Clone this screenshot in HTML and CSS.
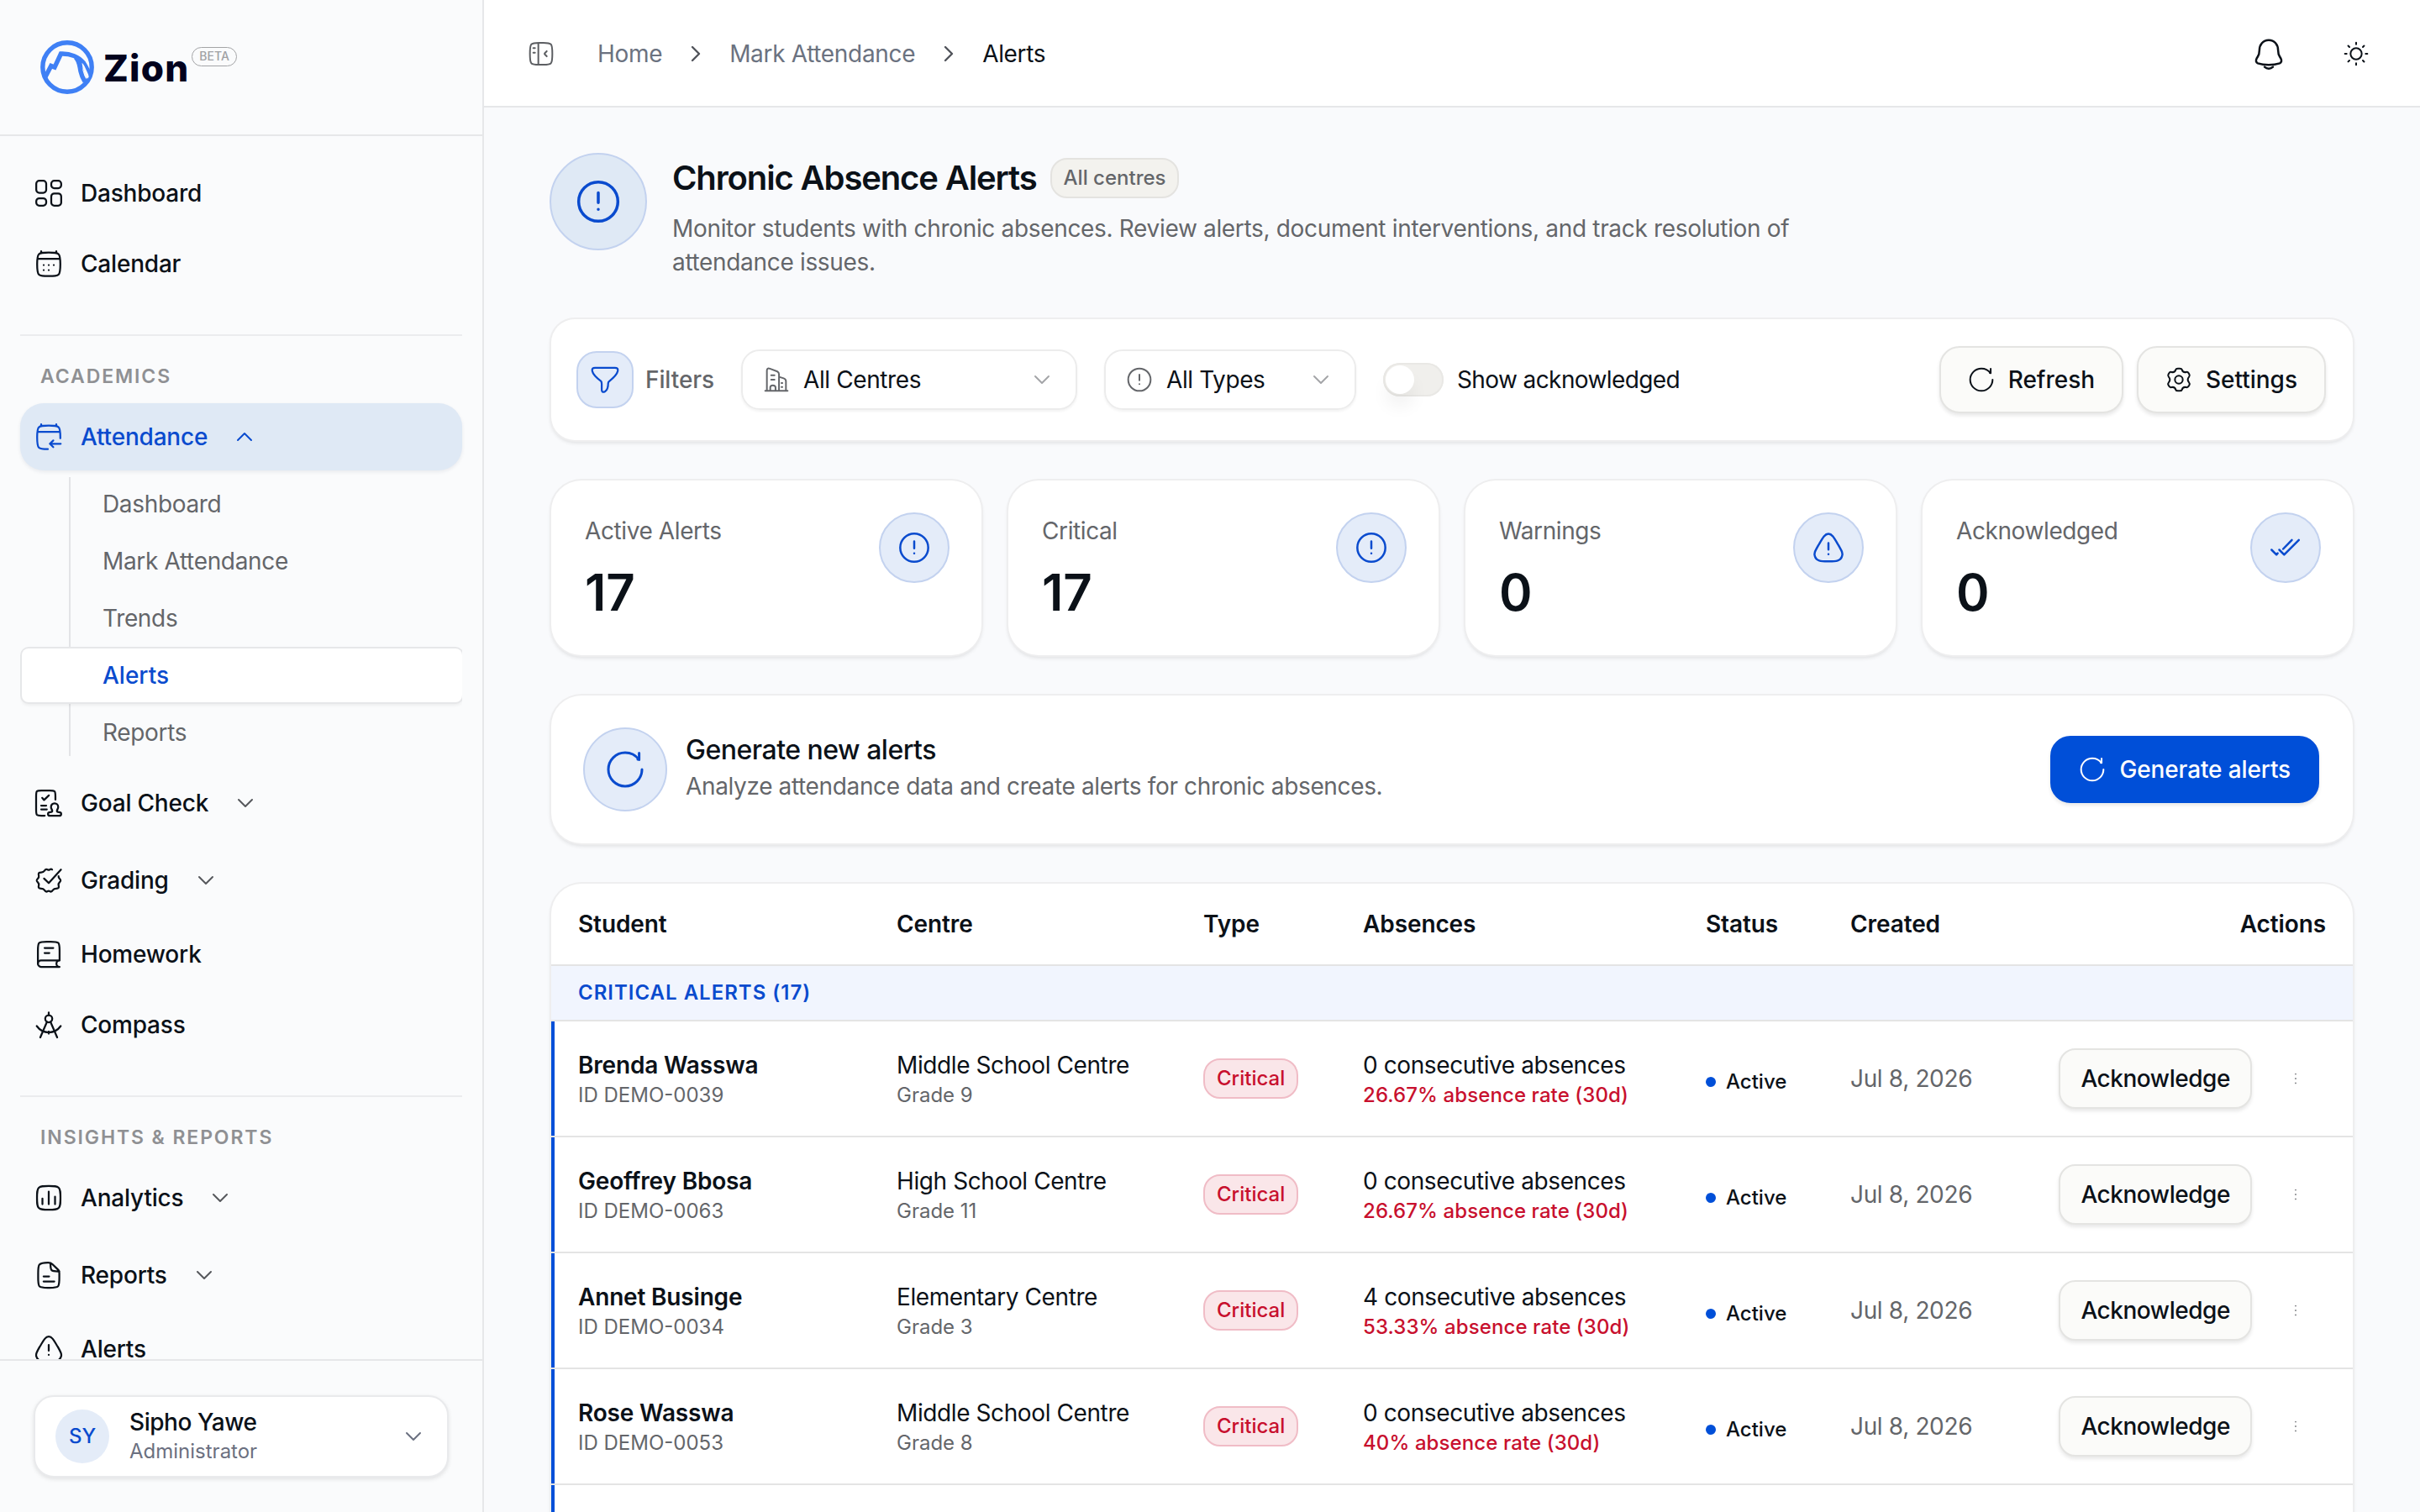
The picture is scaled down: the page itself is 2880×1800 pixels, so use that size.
FILE: index.html
```html
<!DOCTYPE html>
<html lang="en">
  <head>
    <meta charset="UTF-8" />
    <meta name="viewport" content="width=device-width, initial-scale=1.0" />
    <title>Chronic Absence Alerts - Zion</title>
    <link rel="stylesheet" href="styles.css">
  </head>
  <body>
    <!-- icon sprite -->
    <svg class="sprite" xmlns="http://www.w3.org/2000/svg">
      <symbol id="i-dashboard" viewBox="0 0 24 24">
        <rect x="2.1" y="2.1" width="7.9" height="9.6" rx="2.4" />
        <rect x="2.1" y="16" width="7.9" height="5.9" rx="2.4" />
        <rect x="14" y="2.1" width="7.9" height="5.9" rx="2.4" />
        <rect x="14" y="12.2" width="7.9" height="9.7" rx="2.4" />
      </symbol>
      <symbol id="i-calendar" viewBox="0 0 24 24">
        <path d="M18 2v1.6M6 2v1.6M3 8h18M2.8 12.4c0-4.3 0-6.5 1.3-7.9C5.3 3.1 7.5 3.1 12 3.1s6.7 0 7.9 1.4c1.3 1.4 1.3 3.6 1.3 7.9s0 6.7-1.3 8.1c-1.2 1.3-3.4 1.3-7.9 1.3s-6.7 0-7.9-1.3C2.8 19.1 2.8 16.7 2.8 12.4Z" />
        <path d="M8 13h.01M12 13h.01M16 13h.01M8 17h.01M12 17h.01" />
      </symbol>
      <symbol id="i-calendar-in" viewBox="0 0 24 24">
        <path d="M18 2v1.6M6 2v1.6M3 8h18M21.2 13.2v-1c0-4.2 0-6.3-1.3-7.7C18.7 3.1 16.5 3.1 12 3.1s-6.7 0-7.9 1.4C2.8 5.9 2.8 8 2.8 12.4c0 4.3 0 6.7 1.3 8.1 1.1 1.2 3 1.3 7.2 1.3" />
        <path d="M21.5 17.5h-8.4M15.6 14.9l-2.7 2.6 2.7 2.7" />
      </symbol>
      <symbol id="i-goal" viewBox="0 0 24 24">
        <path d="M17.3 9.3V6.8c0-2.3 0-3.4-.7-4.1-.7-.7-1.7-.7-3.8-.7H6.2c-2 0-3 0-3.6.7C2 3.4 2 4.5 2 6.8v10.4c0 2.3 0 3.4.6 4.1.7.7 1.6.7 3.6.7h2.6" />
        <path d="M6.8 7.9l1.5 1.7 3.8-3.7M6 14h4M6 17h4.5M16.6 12.3c-1.7 0-2.8 1.2-2.8 2.8 0 1.4.9 2 1 3.1 0 .8-.5 1-1.5 1-1.1 0-1.9.4-1.9 1.4 0 .9.6 1.5 1.6 1.5h7.3c1 0 1.6-.6 1.6-1.5 0-1-.8-1.4-1.9-1.4-1 0-1.5-.2-1.5-1 .1-1.100 1-1.700 1-3.100 0-1.600-1.200-2.800-2.900-2.800Z" />
      </symbol>
      <symbol id="i-grading" viewBox="0 0 24 24">
        <path d="M19.8 8.7c-.2.9.3 1.5.9 2.1 1.1 1.1 1.1 1.5 0 2.6-.9.9-1.2 1.4-.9 2.5.5 1.9.1 2.6-1.9 2.6-1.2 0-1.9.3-2.6 1.3-.9 1.4-1.5 1.5-2.5.9-.6-.4-1.1-.4-1.7 0-1 .6-1.6.5-2.5-.9-.7-1-1.4-1.3-2.6-1.3-2 0-2.4-.7-1.9-2.6.3-1.1 0-1.6-.9-2.5-1.1-1.1-1.1-1.5 0-2.6.9-.9 1.2-1.4.9-2.5-.5-1.9-.1-2.6 1.9-2.6 1.2 0 1.9-.3 2.6-1.3.9-1.4 1.5-1.5 2.5-.9.6.4 1.1.4 1.7 0 .8-.5 1.3-.6 1.9 0" />
        <path d="M8.3 10.6l3.7 3.6 9.7-10.7" />
      </symbol>
      <symbol id="i-book" viewBox="0 0 24 24">
        <path d="M20.6 16.9V9c0-3.3 0-5-1-6s-2.7-1-6-1h-3.2c-3.3 0-5 0-6 1s-1 2.7-1 6v10.5" />
        <path d="M20.6 16.9H5.9c-1.4 0-2.5 1.1-2.5 2.5S4.5 22 5.9 22h14.7M20.6 22c-1.4 0-2.5-1.1-2.5-2.5s1.1-2.6 2.5-2.6M15.6 7H8.7M12.5 11H8.7" />
      </symbol>
      <symbol id="i-compass" viewBox="0 0 24 24">
        <circle cx="12" cy="7.2" r="2.8" />
        <path d="M12 4.4V2.2M10.6 9.7L5.3 22M13.4 9.7L18.7 22M2.5 13c2.3 3.2 5.7 5 9.5 5s7.200-1.800 9.500-5M12 17.400v1.600" />
      </symbol>
      <symbol id="i-analytics" viewBox="0 0 24 24">
        <path d="M2.7 12c0-4.4 0-6.6 1.4-8S7.6 2.6 12 2.6s6.5 0 7.9 1.4 1.4 3.6 1.4 8 0 6.6-1.4 8-3.5 1.4-7.9 1.4-6.5 0-7.9-1.4-1.4-3.6-1.4-8ZM7 17v-4.5M12 17V7M17 17v-6" />
      </symbol>
      <symbol id="i-report" viewBox="0 0 24 24">
        <path d="M7.9 17h8.5M7.9 13h4.4M13.4 2.5V3c0 2.8 0 4.2.9 5.1.9.9 2.3.9 5.1.9h1M20.4 10.7V14c0 3.8 0 5.7-1 6.8-1.2 1.2-3 1.2-6.5 1.2h-1.8c-3.5 0-5.3 0-6.5-1.2-1-1.1-1-3-1-6.8v-3.5c0-3.7 0-5.6 1-6.9 1.3-1.5 3.2-1.6 6.9-1.6 1.9 0 2.2.1 3.4 1.3l3.9 3.8c1.4 1.4 1.6 1.6 1.6 3.6Z" />
      </symbol>
      <symbol id="i-triangle" viewBox="0 0 24 24">
        <path d="M12 8.700v4.600M12 16.600h.01" />
        <path d="M5.3 9.500C8.200 4.500 9.600 2.100 12 2.100s3.800 2.400 6.700 7.400l.4.600c2.400 4.200 3.600 6.300 2.500 8.300-1.100 3-3.800 3.400-9.100 3.400h-1c-5.300 0-8-.4-9.100-3.400-1.100-2 .1-4.100 2.500-8.300Z" />
      </symbol>
      <symbol id="i-alert" viewBox="0 0 24 24">
        <circle cx="12" cy="12" r="10" />
        <path d="M12 7.5v5M12 16h.01" />
      </symbol>
      <symbol id="i-down" viewBox="0 0 24 24"><path d="M18 9l-6 6-6-6" /></symbol>
      <symbol id="i-up" viewBox="0 0 24 24"><path d="M18 15l-6-6-6 6" /></symbol>
      <symbol id="i-right" viewBox="0 0 24 24"><path d="M9 6l6 6-6 6" /></symbol>
      <symbol id="i-panel" viewBox="0 0 24 24">
        <path d="M2 12c0-4.7 0-7 1.2-8.4C4.6 2.2 6.7 2.2 10 2.2h4c3.3 0 5.4 0 6.8 1.4C22 5 22 7.3 22 12s0 7-1.2 8.4c-1.4 1.4-3.5 1.4-6.8 1.4h-4c-3.3 0-5.4 0-6.8-1.4C2 19 2 16.7 2 12ZM9.5 2.5v19M5 7h1.5M5 11h1.5M17 9.7l-1.7 1.7c-.4.4-.4.8 0 1.2L17 14.3" />
      </symbol>
      <symbol id="i-bell" viewBox="0 0 24 24">
        <path d="M5.3 9.7c0-4.3 2.7-7.5 6.7-7.5s6.7 3.2 6.7 7.5c0 3.3.8 3.6 1.8 5.4 1.1 2 .5 3.2-.7 3.7-4.3 1.5-11.3 1.5-15.6 0-1.2-.5-1.8-1.7-.7-3.7 1-1.8 1.8-2.1 1.8-5.4Z" />
        <path d="M9 21.4c1.7 1.6 4.3 1.6 6 0" />
      </symbol>
      <symbol id="i-sun" viewBox="0 0 24 24">
        <circle cx="12" cy="12" r="5" />
        <path d="M12 2v1.5M12 20.5V22M19.07 4.93l-1.06 1.06M5.99 18l-1.06 1.06M22 12h-1.5M3.5 12H2M19.07 19.07l-1.06-1.06M5.99 6L4.93 4.93" />
      </symbol>
      <symbol id="i-filter" viewBox="0 0 24 24">
        <path d="M8.9 13.3C4.9 10.3 2.3 7.1 1.9 5.2c-.4-1.7.3-2.7 2.3-2.7h15.600c2 0 2.700 1 2.300 2.700-.4 1.900-3 5.100-6.700 8-.6.500-.9 1.100-.9 1.800 0 4-.7 5.200-2.400 6.300-1.900 1.100-2.700.3-2.700-1.300v-4.500c0-.9 0-1.600-.5-2.200Z" />
      </symbol>
      <symbol id="i-building" viewBox="0 0 24 24">
        <path d="M14.3 22V7.2c0-1.4-.2-1.9-1.5-2.5L6.2 2.2C4.4 1.5 3.5 2 3.5 4v18M14.3 9.5l4.2 1.3c1.5.5 2 .8 2 2.5V22M2 22h20M7.3 8h3M7.3 12h3M16.5 15h.8M16.5 18.5h.8M6.5 22v-3c0-1.4.4-2 2.3-2s2.4.6 2.4 2v3" />
      </symbol>
      <symbol id="i-refresh" viewBox="0 0 24 24">
        <path d="M22 12c0 5.5-4.5 10-10 10S2 17.5 2 12 6.5 2 12 2c3.6 0 6.3 1.6 8 4M20.3 2.3V6.2L19.500 6" />
      </symbol>
      <symbol id="i-settings" viewBox="0 0 24 24">
        <circle cx="12" cy="12" r="3.5" />
        <path d="M21.3 7.1l-.5-.8c-.6-1.1-1-1.4-2.2-1.1-2.1.5-3.2-.1-3.8-2.1-.3-1-.7-1.1-1.9-1.1h-1.8c-1.2 0-1.6.1-1.9 1.1-.6 2-1.7 2.6-3.8 2.1-1.2-.3-1.6 0-2.2 1.1l-.5.8c-.6 1.1-.6 1.5.2 2.4 1.5 1.7 1.5 3.3 0 5-.8.9-.8 1.3-.2 2.4l.5.8c.6 1.1 1 1.4 2.2 1.1 2.1-.5 3.2.1 3.8 2.1.3 1 .7 1.1 1.9 1.1h1.8c1.2 0 1.6-.1 1.9-1.1.6-2 1.7-2.6 3.8-2.1 1.2.3 1.6 0 2.2-1.1l.5-.8c.6-1.1.6-1.5-.2-2.4-1.5-1.7-1.5-3.3 0-5 .8-.9.8-1.3.2-2.4Z" />
      </symbol>
      <symbol id="i-checks" viewBox="0 0 24 24">
        <path d="M2 13.5l3.5 3.5.9-1M16.5 6.500L10.300 12.900M7.500 13.500L11 17 21.500 6.500" />
      </symbol>
      <symbol id="i-more" viewBox="0 0 24 24"><path d="M12 5.5v.01M12 12v.01M12 18.5v.01" /></symbol>
    </svg>

    <div class="layout">
      <aside class="sidebar">
        <div class="brand">
          <svg class="logo" viewBox="0 0 64 64">
            <circle cx="32" cy="32" r="29.2" />
            <path d="M6 43.500L12.800 30.500l4.200 1.600L24.500 16C36 15.500 46 20 51 26.500c3 4 5 8.500 7.500 14.500" />
            <path d="M42 20c5 5 4.500 10 6 17 1 5 2.500 8 5 12M51 26c1.500 7 4 12 7 17" />
            <path class="gap" d="M49.500 27c1.600 1 2.600 2.600 3.400 4.600 1.800 4.600 4.600 8.600 4.800 12l-1.600 2.200c-3.600-5-5.800-11.800-6.600-18.800Z" />
          </svg>
          <span class="brand-name">Zion</span>
          <span class="beta">BETA</span>
        </div>

        <nav class="nav">
          <div class="nav-group">
            <a class="nav-item"><svg class="icon"><use href="#i-dashboard" /></svg>Dashboard</a>
            <a class="nav-item"><svg class="icon"><use href="#i-calendar" /></svg>Calendar</a>
          </div>

          <div class="nav-group">
            <h3 class="nav-label">Academics</h3>
            <div class="nav-collapse">
              <a class="nav-item active"><svg class="icon"><use href="#i-calendar-in" /></svg>Attendance<svg class="caret"><use href="#i-up" /></svg></a>
              <div class="submenu">
                <a>Dashboard</a>
                <a>Mark Attendance</a>
                <a>Trends</a>
                <a class="current">Alerts</a>
                <a>Reports</a>
              </div>
            </div>
            <div class="nav-collapse">
              <a class="nav-item"><svg class="icon"><use href="#i-goal" /></svg>Goal Check<svg class="caret"><use href="#i-down" /></svg></a>
            </div>
            <div class="nav-collapse">
              <a class="nav-item"><svg class="icon"><use href="#i-grading" /></svg>Grading<svg class="caret"><use href="#i-down" /></svg></a>
            </div>
            <a class="nav-item"><svg class="icon"><use href="#i-book" /></svg>Homework</a>
            <a class="nav-item"><svg class="icon"><use href="#i-compass" /></svg>Compass</a>
          </div>

          <div class="nav-group">
            <h3 class="nav-label">Insights &amp; Reports</h3>
            <div class="nav-collapse">
              <a class="nav-item"><svg class="icon"><use href="#i-analytics" /></svg>Analytics<svg class="caret"><use href="#i-down" /></svg></a>
            </div>
            <div class="nav-collapse">
              <a class="nav-item"><svg class="icon"><use href="#i-report" /></svg>Reports<svg class="caret"><use href="#i-down" /></svg></a>
            </div>
            <a class="nav-item"><svg class="icon"><use href="#i-triangle" /></svg>Alerts</a>
          </div>
        </nav>

        <div class="sidebar-footer">
          <div class="user">
            <span class="avatar">SY</span>
            <div class="user-info">
              <span class="user-name">Sipho Yawe</span>
              <span class="user-role">Administrator</span>
            </div>
            <svg class="caret"><use href="#i-down" /></svg>
          </div>
        </div>
      </aside>

      <main class="main">
        <header class="topbar">
          <svg class="icon panel"><use href="#i-panel" /></svg>
          <div class="breadcrumb">
            <span>Home</span>
            <svg class="sep"><use href="#i-right" /></svg>
            <span>Mark Attendance</span>
            <svg class="sep"><use href="#i-right" /></svg>
            <span class="here">Alerts</span>
          </div>
          <svg class="icon bell"><use href="#i-bell" /></svg>
          <svg class="icon sun"><use href="#i-sun" /></svg>
        </header>

        <div class="content">
          <section class="hero">
            <div class="bubble bubble-xl"><svg><use href="#i-alert" /></svg></div>
            <div class="hero-text">
              <div class="hero-title">
                <h1>Chronic Absence Alerts</h1>
                <span class="badge">All centres</span>
              </div>
              <p>Monitor students with chronic absences. Review alerts, document interventions, and track resolution of attendance issues.</p>
            </div>
          </section>

          <section class="card filters">
            <span class="filter-icon"><svg><use href="#i-filter" /></svg></span>
            <span class="filter-label">Filters</span>
            <div class="select select-centre">
              <svg class="lead"><use href="#i-building" /></svg>All Centres<svg class="drop"><use href="#i-down" /></svg>
            </div>
            <div class="select select-type">
              <svg class="lead"><use href="#i-alert" /></svg>All Types<svg class="drop"><use href="#i-down" /></svg>
            </div>
            <span class="switch"></span>
            <span class="switch-label">Show acknowledged</span>
            <div class="filter-actions">
              <button class="btn"><svg><use href="#i-refresh" /></svg>Refresh</button>
              <button class="btn"><svg><use href="#i-settings" /></svg>Settings</button>
            </div>
          </section>

          <section class="stats">
            <div class="card stat">
              <div><span class="stat-label">Active Alerts</span><span class="stat-value">17</span></div>
              <div class="bubble bubble-md"><svg><use href="#i-alert" /></svg></div>
            </div>
            <div class="card stat">
              <div><span class="stat-label">Critical</span><span class="stat-value">17</span></div>
              <div class="bubble bubble-md"><svg><use href="#i-alert" /></svg></div>
            </div>
            <div class="card stat">
              <div><span class="stat-label">Warnings</span><span class="stat-value">0</span></div>
              <div class="bubble bubble-md"><svg><use href="#i-triangle" /></svg></div>
            </div>
            <div class="card stat">
              <div><span class="stat-label">Acknowledged</span><span class="stat-value">0</span></div>
              <div class="bubble bubble-md"><svg><use href="#i-checks" /></svg></div>
            </div>
          </section>

          <section class="card generate">
            <div class="bubble bubble-lg"><svg><use href="#i-refresh" /></svg></div>
            <div class="generate-text">
              <h2>Generate new alerts</h2>
              <p>Analyze attendance data and create alerts for chronic absences.</p>
            </div>
            <button class="btn btn-primary"><svg><use href="#i-refresh" /></svg>Generate alerts</button>
          </section>

          <section class="card table-card">
            <table>
              <colgroup>
                <col class="c-student" />
                <col class="c-centre" />
                <col class="c-type" />
                <col class="c-absences" />
                <col class="c-status" />
                <col class="c-created" />
                <col />
              </colgroup>
              <thead>
                <tr>
                  <th>Student</th>
                  <th>Centre</th>
                  <th>Type</th>
                  <th>Absences</th>
                  <th>Status</th>
                  <th>Created</th>
                  <th class="right">Actions</th>
                </tr>
              </thead>
              <tbody>
                <tr class="section-row"><td colspan="7">Critical alerts (17)</td></tr>
                <tr class="row">
                  <td><b>Brenda Wasswa</b><small>ID DEMO-0039</small></td>
                  <td><span>Middle School Centre</span><small>Grade 9</small></td>
                  <td><em class="critical">Critical</em></td>
                  <td><span>0 consecutive absences</span><small class="rate">26.67% absence rate (30d)</small></td>
                  <td><div class="status">Active</div></td>
                  <td class="date">Jul 8, 2026</td>
                  <td><div class="actions"><button class="btn btn-sm">Acknowledge</button><svg class="more"><use href="#i-more" /></svg></div></td>
                </tr>
                <tr class="row">
                  <td><b>Geoffrey Bbosa</b><small>ID DEMO-0063</small></td>
                  <td><span>High School Centre</span><small>Grade 11</small></td>
                  <td><em class="critical">Critical</em></td>
                  <td><span>0 consecutive absences</span><small class="rate">26.67% absence rate (30d)</small></td>
                  <td><div class="status">Active</div></td>
                  <td class="date">Jul 8, 2026</td>
                  <td><div class="actions"><button class="btn btn-sm">Acknowledge</button><svg class="more"><use href="#i-more" /></svg></div></td>
                </tr>
                <tr class="row">
                  <td><b>Annet Businge</b><small>ID DEMO-0034</small></td>
                  <td><span>Elementary Centre</span><small>Grade 3</small></td>
                  <td><em class="critical">Critical</em></td>
                  <td><span>4 consecutive absences</span><small class="rate">53.33% absence rate (30d)</small></td>
                  <td><div class="status">Active</div></td>
                  <td class="date">Jul 8, 2026</td>
                  <td><div class="actions"><button class="btn btn-sm">Acknowledge</button><svg class="more"><use href="#i-more" /></svg></div></td>
                </tr>
                <tr class="row">
                  <td><b>Rose Wasswa</b><small>ID DEMO-0053</small></td>
                  <td><span>Middle School Centre</span><small>Grade 8</small></td>
                  <td><em class="critical">Critical</em></td>
                  <td><span>0 consecutive absences</span><small class="rate">40% absence rate (30d)</small></td>
                  <td><div class="status">Active</div></td>
                  <td class="date">Jul 8, 2026</td>
                  <td><div class="actions"><button class="btn btn-sm">Acknowledge</button><svg class="more"><use href="#i-more" /></svg></div></td>
                </tr>
                <tr class="row"><td></td><td></td><td></td><td></td><td></td><td></td><td></td></tr>
              </tbody>
            </table>
          </section>
        </div>
      </main>
    </div>
  </body>
</html>
```
FILE: styles.css
```css
* {
  box-sizing: border-box;
  margin: 0;
  padding: 0;
}

body {
  height: 100vh;
  overflow: hidden;
  font-family: Inter, "Liberation Sans", sans-serif;
  font-size: 28px;
  line-height: 40px;
  color: #0b1118;
  background: #f9fafc;
}

.sprite {
  display: none;
}

svg {
  flex: none;
  fill: none;
  stroke: currentColor;
  stroke-width: 1.5;
  stroke-linecap: round;
  stroke-linejoin: round;
}

.layout {
  display: flex;
  height: 100vh;
  overflow: hidden;
}

/* Sidebar */
.sidebar {
  display: flex;
  flex-direction: column;
  width: 576px;
  flex: none;
  border-right: 2px solid #e6e7e9;
  background: #fafbfc;
}

.brand {
  display: flex;
  align-items: flex-start;
  height: 162px;
  padding: 48px 48px 0;
  border-bottom: 2px solid #e6e7e9;

  .logo {
    width: 64px;
    height: 64px;
    stroke: #3f80f5;
    stroke-width: 5.4;
    stroke-linecap: butt;
    stroke-linejoin: miter;
  }

  .gap {
    fill: #fafbfc;
    stroke: none;
  }

  .brand-name {
    margin-left: 11px;
    font-size: 44px;
    font-weight: 800;
    line-height: 66px;
    letter-spacing: 1.2px;
    color: #02021e;
  }

  .beta {
    height: 23px;
    margin: 8px 0 0 3px;
    padding: 0 8px;
    border: 1.5px solid #a3a4a6;
    border-radius: 12px;
    font-size: 14px;
    font-weight: 500;
    line-height: 20px;
    color: #a0a1a4;
  }
}

.nav {
  flex: 1;
  min-height: 0;
  overflow: hidden;
  padding: 28px 24px 0;
}

.nav-group {
  display: flex;
  flex-direction: column;
  gap: 4px;

  & + & {
    margin-top: 44px;
    border-top: 2px solid #ebecee;
  }
}

.nav-label {
  margin: 32px 0 8px;
  padding-left: 24px;
  font-size: 23px;
  font-weight: 600;
  line-height: 32px;
  letter-spacing: 1.9px;
  text-transform: uppercase;
  color: #8f9093;
}

.nav-collapse {
  padding: 4px 0;
}

.nav-item {
  display: flex;
  align-items: center;
  height: 80px;
  padding-left: 16px;
  border-radius: 28px;
  font-weight: 500;
  letter-spacing: -0.2px;

  .icon {
    width: 36px;
    height: 36px;
    margin-right: 20px;
  }

  .caret {
    width: 32px;
    height: 32px;
    margin-left: 28px;
    color: #56585c;
  }

  &.active {
    color: #0a4bce;
    background: #dfe9f5;
    box-shadow: 0 2px 4px rgba(20, 40, 80, 0.08);

    .caret {
      color: #0a4bce;
    }
  }
}

.submenu {
  display: flex;
  flex-direction: column;
  gap: 4px;
  height: 336px;
  margin-top: 8px;
  overflow: hidden;
  background: linear-gradient(#e3e4e6, #e3e4e6) 58px 0 / 2px 332px no-repeat;

  > a {
    height: 64px;
    padding-left: 96px;
    margin-left: 2px;
    line-height: 64px;
    letter-spacing: -0.34px;
    color: #64666a;
  }

  > .current {
    border-radius: 8px;
    font-weight: 500;
    letter-spacing: 0;
    color: #0a4bce;
    background: #fff;
    box-shadow: 0 0 0 2px #e6e7e9, 0 3px 4px rgba(0, 0, 0, 0.08);
  }
}

.sidebar-footer {
  height: 182px;
  padding: 41px 40px 0;
  border-top: 2px solid #e6e7e9;
}

.user {
  display: flex;
  align-items: center;
  height: 98px;
  padding: 0 24px;
  border: 2px solid #e9eaec;
  border-radius: 24px;
  background: #fff;
  box-shadow: 0 2px 5px rgba(0, 0, 0, 0.1);

  .avatar {
    width: 64px;
    height: 64px;
    border-radius: 50%;
    font-size: 24px;
    font-weight: 500;
    line-height: 64px;
    text-align: center;
    color: #0a4bce;
    background: #e4ecf8;
  }

  .user-info {
    flex: 1;
    margin-left: 24px;
  }

  .user-name {
    display: block;
    font-weight: 500;
    line-height: 36px;
    letter-spacing: -0.45px;
  }

  .user-role {
    display: block;
    font-size: 24px;
    line-height: 34px;
    color: #6b7080;
  }

  .caret {
    width: 32px;
    height: 32px;
    color: #6b7080;
  }
}

/* Top bar */
.main {
  flex: 1;
  min-width: 0;
}

.topbar {
  display: flex;
  align-items: center;
  height: 128px;
  padding: 2px 60px 0 52px;
  border-bottom: 2px solid #e6e7e9;
  background: #fff;

  .panel {
    width: 32px;
    height: 32px;
    color: #5c5e62;
  }

  .bell {
    width: 40px;
    height: 40px;
    margin-left: auto;
  }

  .sun {
    width: 32px;
    height: 32px;
    margin-left: 68px;
  }
}

.breadcrumb {
  display: flex;
  align-items: center;
  margin-left: 51px;
  letter-spacing: -0.33px;
  color: #6b7280;

  .sep {
    width: 32px;
    height: 32px;
    margin: 0 24px;
    stroke-width: 1.8;
    color: #50535a;
  }

  .here {
    color: #0b1118;
  }
}

/* Page content */
.content {
  display: flex;
  flex-direction: column;
  gap: 48px;
  padding: 54px 80px 0;
}

.hero {
  display: flex;
  height: 150px;
  margin-left: -2px;

  p {
    max-width: 1344px;
    margin-top: 12px;
    letter-spacing: -0.33px;
    color: #64666a;
  }
}

.hero-text {
  margin: 2px 0 0 30px;
}

.hero-title {
  display: flex;
  align-items: center;
  height: 56px;

  h1 {
    font-size: 40px;
    font-weight: 600;
    letter-spacing: -1.13px;
  }
}

.badge {
  height: 48px;
  margin-left: 16px;
  padding: 0 14px;
  border: 2px solid #e4e3e0;
  border-radius: 20px;
  font-size: 24px;
  font-weight: 500;
  line-height: 44px;
  color: #64666a;
  background: #f3f2ee;
}

.bubble {
  display: flex;
  flex: none;
  align-items: center;
  justify-content: center;
  border: 2px solid #c3d2ef;
  border-radius: 50%;
  color: #0a4bce;
  background: #e4ecf9;
}

.bubble-xl {
  width: 116px;
  height: 116px;
  background: #dfe9f5;

  svg {
    width: 56px;
    height: 56px;
  }
}

.bubble-lg {
  width: 100px;
  height: 100px;

  svg {
    width: 48px;
    height: 48px;
  }
}

.bubble-md {
  width: 84px;
  height: 84px;

  svg {
    width: 40px;
    height: 40px;
  }
}

.card {
  border-radius: 36px;
  background: #fff;
  box-shadow: 0 0 0 2px #eeeeef, 0 3px 5px rgba(0, 0, 0, 0.12);
}

.filters {
  display: flex;
  align-items: center;
  height: 144px;
  padding: 0 32px 0 30px;
  border-radius: 28px;
}

.filter-icon {
  display: flex;
  align-items: center;
  justify-content: center;
  width: 68px;
  height: 68px;
  border: 2px solid #c3d2ef;
  border-radius: 24px;
  color: #0a4bce;
  background: #e4ecf9;

  svg {
    width: 36px;
    height: 36px;
  }
}

.filter-label {
  width: 114px;
  margin-left: 14px;
  font-weight: 500;
  letter-spacing: -0.1px;
  color: #64666a;
}

.select {
  display: flex;
  align-items: center;
  height: 72px;
  padding: 0 24px;
  border: 2px solid #ececec;
  border-radius: 22px;
  letter-spacing: -0.4px;
  box-shadow: 0 2px 3px rgba(0, 0, 0, 0.05);

  .lead {
    width: 32px;
    height: 32px;
    margin-right: 16px;
    color: #64666a;
  }

  .drop {
    width: 32px;
    height: 32px;
    margin-left: auto;
    color: #a4a5a8;
  }
}

.select-centre {
  width: 400px;
}

.select-type {
  width: 300px;
  margin-left: 32px;
}

.switch {
  width: 72px;
  height: 40px;
  margin-left: 32px;
  padding: 3px;
  border-radius: 20px;
  background: #f0efec;
  box-shadow: inset 0 0 0 2px #e9e8e5;

  &::before {
    content: "";
    display: block;
    width: 34px;
    height: 34px;
    border-radius: 50%;
    background: #fff;
    box-shadow: 0 16px 20px rgba(0, 0, 0, 0.05);
  }
}

.switch-label {
  margin-left: 16px;
  letter-spacing: -0.6px;
}

.filter-actions {
  display: flex;
  gap: 16px;
  margin-left: auto;
}

.btn {
  display: flex;
  align-items: center;
  height: 80px;
  padding: 0 32px;
  border: 2px solid #e4e4e2;
  border-radius: 24px;
  font: inherit;
  font-weight: 500;
  letter-spacing: -0.02px;
  color: inherit;
  background: #fbfbf9;
  box-shadow: 0 3px 4px rgba(0, 0, 0, 0.09);

  svg {
    width: 32px;
    height: 32px;
    margin-right: 16px;
  }
}

.btn-primary {
  border-color: #004fd8;
  letter-spacing: -0.13px;
  color: #fff;
  background: #004fd8;
}

.btn-sm {
  height: 72px;
  padding: 0 24px;
  border-radius: 20px;
  letter-spacing: -0.45px;
}

.stats {
  display: grid;
  grid-template-columns: repeat(4, 1fr);
  gap: 32px;
}

.stat {
  display: flex;
  justify-content: space-between;
  height: 208px;
  padding: 38px 38px 0 40px;
}

.stat-label {
  display: block;
  padding-top: 2px;
  letter-spacing: -0.4px;
  color: #64666a;
}

.stat-value {
  display: block;
  margin-top: 17px;
  font-size: 60px;
  font-weight: 600;
  line-height: 72px;
}

.generate {
  display: flex;
  align-items: center;
  height: 176px;
  padding: 0 40px 0 38px;

  h2 {
    font-size: 32px;
    font-weight: 500;
    line-height: 44px;
    letter-spacing: -0.5px;
  }

  p {
    margin-top: 1px;
    letter-spacing: -0.36px;
    color: #64666a;
  }

  .btn {
    margin-left: auto;
  }
}

.generate-text {
  margin: -5px 0 0 22px;
}

/* Alerts table */
.table-card {
  overflow: hidden;
}

table {
  width: 100%;
  table-layout: fixed;
  border-collapse: separate;
  border-spacing: 0;
}

.c-student { width: 411px; }
.c-centre { width: 365px; }
.c-type { width: 190px; }
.c-absences { width: 408px; }
.c-status { width: 172px; }
.c-created { width: 240px; }

th,
td {
  border-bottom: 2px solid #e4e4e4;
  text-align: left;
  vertical-align: middle;
}

th:first-child,
td:first-child {
  padding-left: 32px;
}

th {
  height: 98px;
  font-weight: 600;
  letter-spacing: -0.1px;

  &.right {
    padding-right: 32px;
    text-align: right;
  }
}

.section-row td {
  height: 66px;
  font-size: 24px;
  font-weight: 600;
  letter-spacing: 1px;
  text-transform: uppercase;
  color: #0a4bce;
  background: #f1f5fe;
}

.row {
  td {
    height: 138px;
  }

  td:first-child {
    box-shadow: inset 4px 0 #004fd8;
  }

  b,
  span {
    display: block;
    font-weight: 400;
    letter-spacing: -0.4px;
  }

  b {
    font-weight: 600;
    letter-spacing: -0.18px;
  }

  small {
    display: block;
    font-size: 24px;
    line-height: 32px;
    color: #64666a;
  }

  .rate {
    font-weight: 500;
    letter-spacing: 0.1px;
    color: #c8102e;
  }

  .date {
    letter-spacing: -0.35px;
    color: #64666a;
  }
}

.critical {
  display: inline-block;
  height: 48px;
  padding: 0 14px;
  border: 2px solid #f0bcc6;
  border-radius: 20px;
  font-size: 24px;
  font-style: normal;
  font-weight: 500;
  line-height: 44px;
  vertical-align: middle;
  color: #c8102e;
  background: #fae6e9;
}

.status {
  display: flex;
  align-items: center;
  padding-top: 8px;
  font-size: 24px;
  font-weight: 500;

  &::before {
    content: "";
    width: 12px;
    height: 12px;
    margin-right: 12px;
    border-radius: 50%;
    background: #004fd8;
  }
}

.actions {
  display: flex;
  align-items: center;
  justify-content: flex-end;
  padding-right: 58px;

  .more {
    width: 20px;
    height: 20px;
    margin-left: 42px;
    stroke-width: 2.2;
    color: #77797d;
  }
}
```
